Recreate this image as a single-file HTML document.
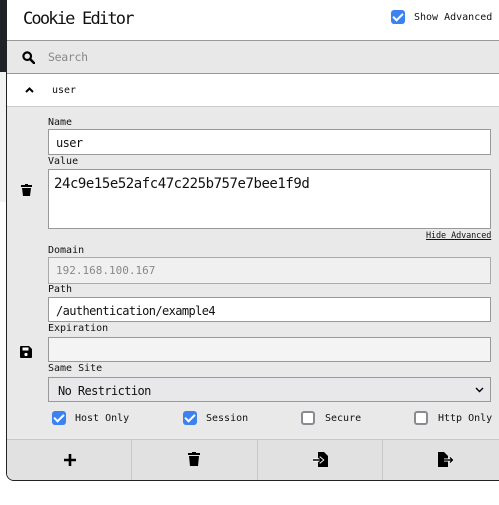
<!DOCTYPE html>
<html><head><style>
*{box-sizing:border-box;margin:0;padding:0}
body{width:499px;height:505px;background:#fff;font-family:"DejaVu Sans Mono","Liberation Mono",monospace;position:relative;overflow:hidden;color:#111}
.strip{position:absolute;left:0;top:0;width:7px;height:72px;background:#1f2328}
.strip2{position:absolute;left:0;top:72px;width:7px;height:130px;background:#f2f2f2}
.pop{position:absolute;left:6px;top:0;width:500px;height:481px;border:1px solid #222;border-top:none;border-radius:0 0 0 8px;background:#fff;overflow:hidden}
.title{position:absolute;left:16px;top:9px;font-size:17px;letter-spacing:-1.8px}
.sa{position:absolute;left:384px;top:10px;font-size:10px;display:flex;align-items:center}
.cb{width:14px;height:14px;border-radius:3px;display:inline-block;position:relative;flex:none}
.cb.on{background:#3b82f0}
.cb.on:after{content:"";position:absolute;left:4px;top:1px;width:4px;height:8px;border:solid #fff;border-width:0 2px 2px 0;transform:rotate(45deg)}
.cb.off{border:2px solid #8a8a93;background:#fff}
.search{position:absolute;left:0;top:40px;width:100%;height:34px;background:#e8e8e8;border-top:1px solid #999;border-bottom:1px solid #999}
.search span{position:absolute;left:41px;top:9px;font-size:11.5px;letter-spacing:-0.3px;color:#888}
.row{position:absolute;left:0;top:74px;width:100%;height:33px;background:#fff;border-bottom:1px solid #ccc}
.row span{position:absolute;left:45px;top:11px;font-size:10px}
.det{position:absolute;left:0;top:107px;width:100%;height:332px;background:#e9e9e9}
.lbl{position:absolute;left:41px;font-size:10px}
.inp{position:absolute;left:41px;width:443px;background:#fff;border:1px solid #999;font-size:12px;letter-spacing:-0.6px;padding:6px 7px;white-space:nowrap}
.foot{position:absolute;left:0;top:439px;width:100%;height:42px;background:#e1e1e1;border-top:1px solid #c8c8c8}
.foot div{position:absolute;top:0;height:41px;border-left:1px solid #c8c8c8}
.ck{position:absolute;top:411px;display:flex;align-items:center;font-size:10px;white-space:nowrap}
.ck span+span{margin-left:9px}
</style></head><body>
<div class="strip"></div><div class="strip2"></div>
<div class="pop">
<div class="title">Cookie Editor</div>
<div class="sa"><span class="cb on"></span><span style="margin-left:9px">Show Advanced</span></div>
<div class="search">
<svg style="position:absolute;left:15px;top:10px" width="13" height="13" viewBox="0 0 13 13"><circle cx="5.2" cy="5.2" r="3.8" fill="none" stroke="#000" stroke-width="2.2"/><path d="M8 8l4 4" stroke="#000" stroke-width="2.6" stroke-linecap="round"/></svg>
<span>Search</span></div>
<div class="row"><svg style="position:absolute;left:18px;top:13px" width="9" height="6" viewBox="0 0 9 6"><path d="M1 5l3.5-3.5L8 5" fill="none" stroke="#000" stroke-width="2"/></svg><span>user</span></div>
<div class="det">
<div class="lbl" style="top:10px">Name</div>
<div class="inp" style="top:22px;height:26px">user</div>
<div class="lbl" style="top:49px">Value</div>
<div class="inp" style="top:62px;height:60px;font-size:14px;letter-spacing:-0.45px;padding:6px 5px">24c9e15e52afc47c225b757e7bee1f9d</div>
<div style="position:absolute;left:419px;top:124px;font-size:8.5px;letter-spacing:-0.1px;text-decoration:underline">Hide Advanced</div>
<div class="lbl" style="top:138px">Domain</div>
<div class="inp" style="top:150px;height:27px;background:#f0f0f0;color:#888;border-color:#aaa;font-size:11px;letter-spacing:0">192.168.100.167</div>
<div class="lbl" style="top:177px">Path</div>
<div class="inp" style="top:190px;height:25px">/authentication/example4</div>
<div class="lbl" style="top:216px">Expiration</div>
<div class="inp" style="top:230px;height:25px;background:#f4f4f4"></div>
<div class="lbl" style="top:256px">Same Site</div>
<div class="inp" style="top:270px;height:25px;background:#e8e8ea;padding-left:9px">No Restriction<svg style="position:absolute;right:6px;top:9px" width="9" height="6" viewBox="0 0 9 6"><path d="M1 1l3.5 3.5L8 1" fill="none" stroke="#000" stroke-width="1.4"/></svg></div>
<svg style="position:absolute;left:14px;top:77px" width="11" height="12" viewBox="0 0 11 12"><rect x="0" y="1" width="11" height="2" fill="#000"/><rect x="4" y="0" width="3" height="2" fill="#000"/><path d="M1 4h9l-1 8H2z" fill="#000"/></svg>
<svg style="position:absolute;left:13px;top:239px" width="12" height="12" viewBox="0 0 12 12"><path d="M1 0h8l3 3v8a1 1 0 0 1-1 1H1a1 1 0 0 1-1-1V1a1 1 0 0 1 1-1z" fill="#000"/><rect x="2.5" y="1.5" width="6" height="3" fill="#fff"/><circle cx="6" cy="8.5" r="1.6" fill="#fff"/></svg>
</div>
<div class="ck" style="left:45px"><span class="cb on"></span><span>Host Only</span></div>
<div class="ck" style="left:176px"><span class="cb on"></span><span>Session</span></div>
<div class="ck" style="left:294px"><span class="cb off"></span><span style="margin-left:10px">Secure</span></div>
<div class="ck" style="left:407px"><span class="cb off"></span><span style="margin-left:10px">Http Only</span></div>
<div class="foot">
<div style="left:124px"></div><div style="left:250px"></div><div style="left:375px"></div>
<svg style="position:absolute;left:57px;top:14px" width="12" height="12" viewBox="0 0 12 12"><path d="M6 0v12M0 6h12" stroke="#000" stroke-width="2.6"/></svg>
<svg style="position:absolute;left:181px;top:12px" width="12" height="14" viewBox="0 0 12 14"><rect x="0" y="1" width="12" height="2" fill="#000"/><rect x="4" y="0" width="4" height="2" fill="#000"/><path d="M1 4h10l-1 10H2z" fill="#000"/></svg>
<svg style="position:absolute;left:306px;top:12px" width="15" height="15" viewBox="0 0 15 15"><path d="M5 0h6l4 4v11H5z" fill="#000"/><path d="M0 8h8M6 5.5l3 2.5-3 2.5" fill="none" stroke="#fff" stroke-width="3.2"/><path d="M0 8h8M6 5.5l3 2.5-3 2.5" fill="none" stroke="#000" stroke-width="1.4"/></svg>
<svg style="position:absolute;left:431px;top:12px" width="15" height="15" viewBox="0 0 15 15"><path d="M0 0h6l4 4v11H0z" fill="#000"/><path d="M6 8h8M12 5.5l2.5 2.5-2.5 2.5" fill="none" stroke="#fff" stroke-width="3"/><path d="M6 8h8M12 5.5l2.5 2.5-2.5 2.5" fill="none" stroke="#000" stroke-width="1.4"/></svg>
</div>
</div>
</body></html>
